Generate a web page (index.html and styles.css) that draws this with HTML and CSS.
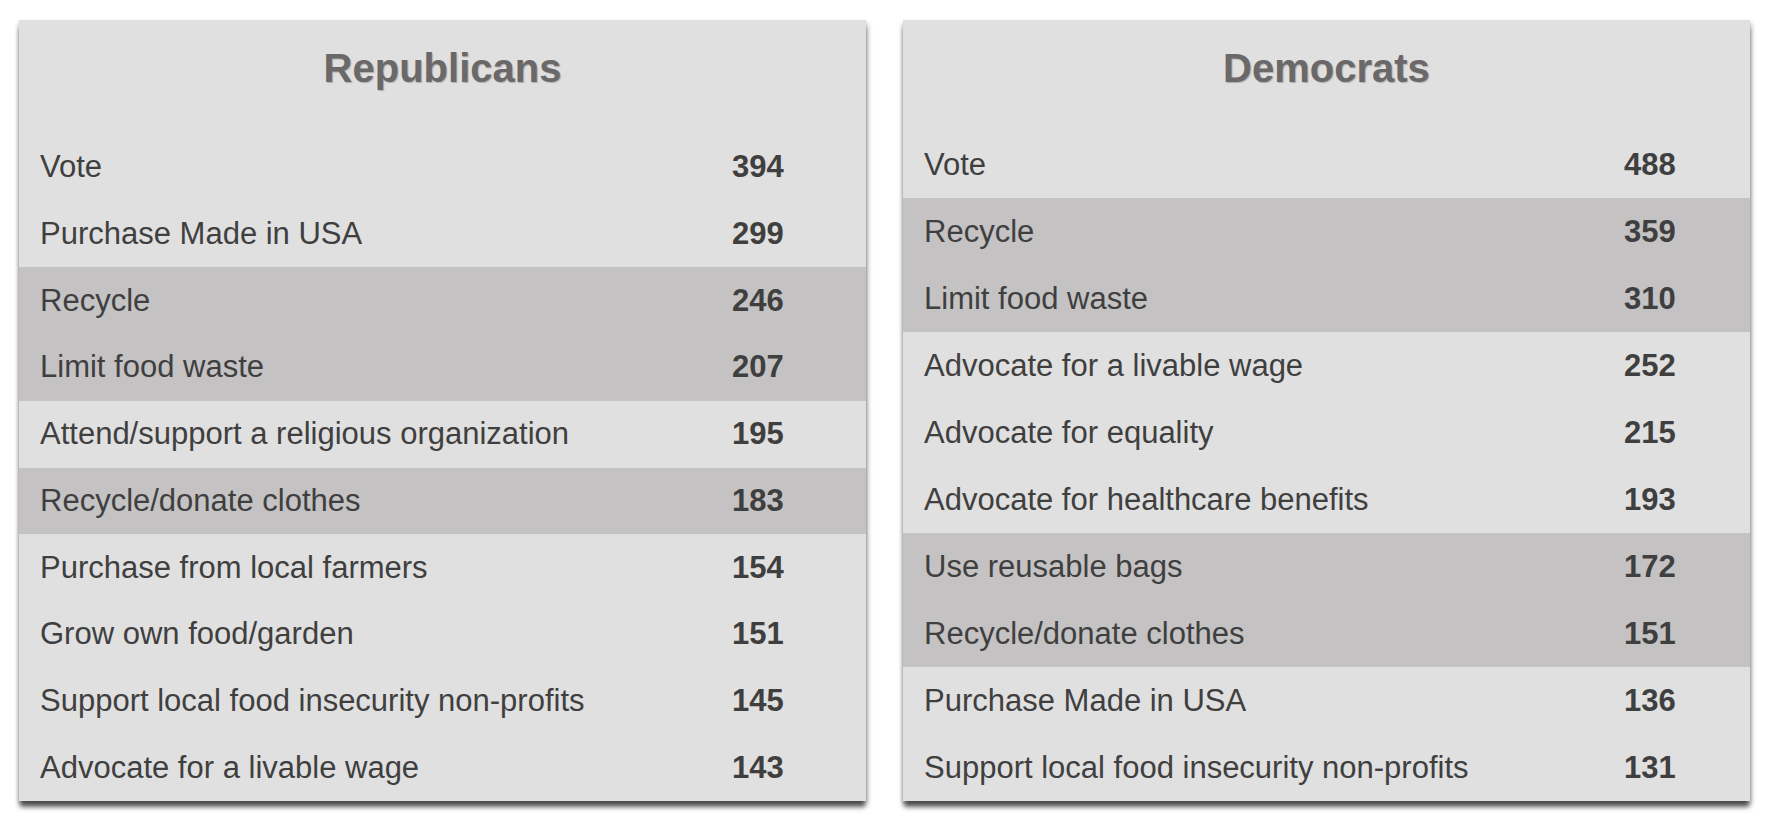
FILE: index.html
```html
<!DOCTYPE html>
<html lang="en">
<head>
<meta charset="utf-8">
<title>Republicans vs Democrats</title>
<link rel="stylesheet" href="styles.css">
</head>
<body>
<main class="board">
  <section class="card card--rep">
    <h2 class="card-title">Republicans</h2>
    <ul class="rows">
      <li class="row"><span class="label">Vote</span><span class="num">394</span></li>
      <li class="row"><span class="label">Purchase Made in USA</span><span class="num">299</span></li>
      <li class="row row--hl"><span class="label">Recycle</span><span class="num">246</span></li>
      <li class="row row--hl"><span class="label">Limit food waste</span><span class="num">207</span></li>
      <li class="row"><span class="label">Attend/support a religious organization</span><span class="num">195</span></li>
      <li class="row row--hl"><span class="label">Recycle/donate clothes</span><span class="num">183</span></li>
      <li class="row"><span class="label">Purchase from local farmers</span><span class="num">154</span></li>
      <li class="row"><span class="label">Grow own food/garden</span><span class="num">151</span></li>
      <li class="row"><span class="label">Support local food insecurity non-profits</span><span class="num">145</span></li>
      <li class="row"><span class="label">Advocate for a livable wage</span><span class="num">143</span></li>
    </ul>
  </section>
  <section class="card card--dem">
    <h2 class="card-title">Democrats</h2>
    <ul class="rows">
      <li class="row"><span class="label">Vote</span><span class="num">488</span></li>
      <li class="row row--hl"><span class="label">Recycle</span><span class="num">359</span></li>
      <li class="row row--hl"><span class="label">Limit food waste</span><span class="num">310</span></li>
      <li class="row"><span class="label">Advocate for a livable wage</span><span class="num">252</span></li>
      <li class="row"><span class="label">Advocate for equality</span><span class="num">215</span></li>
      <li class="row"><span class="label">Advocate for healthcare benefits</span><span class="num">193</span></li>
      <li class="row row--hl"><span class="label">Use reusable bags</span><span class="num">172</span></li>
      <li class="row row--hl"><span class="label">Recycle/donate clothes</span><span class="num">151</span></li>
      <li class="row"><span class="label">Purchase Made in USA</span><span class="num">136</span></li>
      <li class="row"><span class="label">Support local food insecurity non-profits</span><span class="num">131</span></li>
    </ul>
  </section>
</main>
</body>
</html>
```

FILE: styles.css
```css
html, body {
  margin: 0;
  padding: 0;
  background: #ffffff;
}

body {
  font-family: "Liberation Sans", Arial, sans-serif;
  color: #3f3f3f;
}

.board {
  display: flex;
  gap: 37px;
  padding: 20px 0 30px 19px;
}

.card {
  width: 847px;
  height: 781px;
  flex: none;
  background: #e0e0e0;
  display: flex;
  flex-direction: column;
  box-shadow: 0 7px 5px -1px rgba(0, 0, 0, 0.6), 2px 3px 5px rgba(0, 0, 0, 0.2), -1px 3px 4px rgba(0, 0, 0, 0.15);
}

.card-title {
  margin: 0;
  padding-top: 28px;
  font-size: 40px;
  line-height: 40px;
  font-weight: 700;
  text-align: center;
  color: #6b6869;
  text-shadow: 1px 1px 1px rgba(0, 0, 0, 0.22);
  box-sizing: border-box;
}

.card--rep .card-title { height: 114px; }
.card--dem .card-title { height: 111px; }

.rows {
  list-style: none;
  margin: 0;
  padding: 0;
  flex: 1;
  display: flex;
  flex-direction: column;
}

.row {
  flex: 1;
  display: grid;
  align-items: center;
  padding-left: 21px;
  font-size: 31px;
}

.card--rep .row { grid-template-columns: 1fr 134px; }
.card--dem .row { grid-template-columns: 1fr 126px; }

.row--hl {
  background: #c4c2c3;
}

.label {
  white-space: nowrap;
}

.num {
  font-weight: 700;
}
```
